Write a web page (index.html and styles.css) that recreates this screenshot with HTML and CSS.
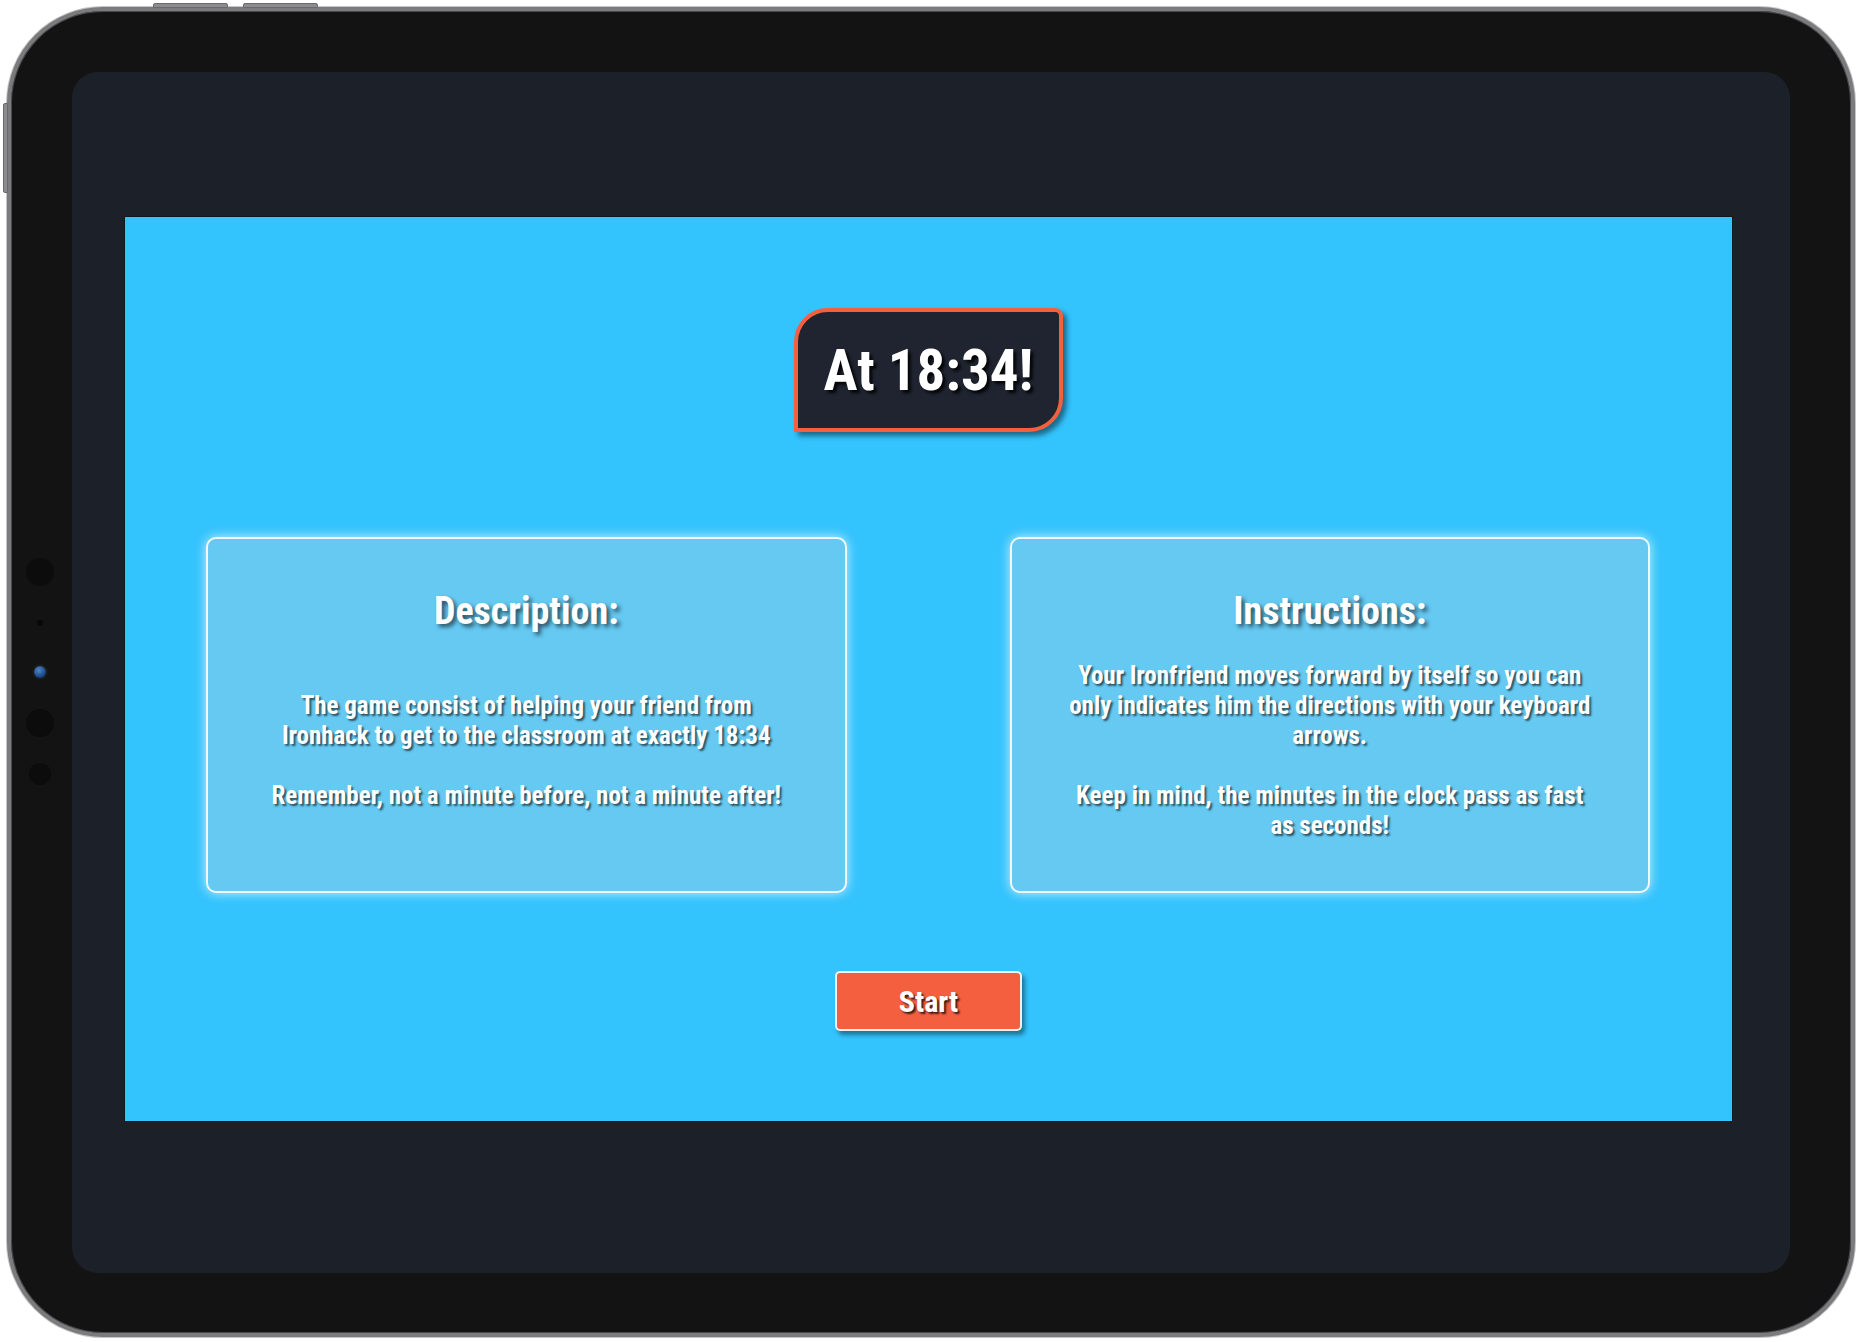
FILE: index.html
```html
<!DOCTYPE html>
<html lang="en">
<head>
<meta charset="utf-8">
<title>At 18:34!</title>
<link rel="stylesheet" href="styles.css">
</head>
<body>
<div class="page">
  <div class="device">
    <span class="hw-btn hw-top hw-top-1"></span>
    <span class="hw-btn hw-top hw-top-2"></span>
    <span class="hw-btn hw-side"></span>
    <span class="sensor s1"></span>
    <span class="sensor s2"></span>
    <span class="sensor s3"></span>
    <span class="sensor s4"></span>
    <span class="sensor s5"></span>
    <div class="screen">
      <main class="game">
        <h1 class="title">At 18:34!</h1>
        <section class="cards">
          <article class="card">
            <h2 class="card-title">Description:</h2>
            <div class="card-body">
              <p>The game consist of helping your friend from Ironhack to get to the classroom at exactly 18:34<br><br>Remember, not a minute before, not a minute after!</p>
            </div>
          </article>
          <article class="card">
            <h2 class="card-title">Instructions:</h2>
            <div class="card-body">
              <p>Your Ironfriend moves forward by itself so you can only indicates him the directions with your keyboard arrows.<br><br>Keep in mind, the minutes in the clock pass as fast as seconds!</p>
            </div>
          </article>
        </section>
        <button class="start">Start</button>
      </main>
    </div>
  </div>
</div>
</body>
</html>
```
FILE: styles.css
```css
* { box-sizing: border-box; }
html, body { margin: 0; padding: 0; background: #ffffff; }
body { font-family: Roboto, "Liberation Sans", sans-serif; }

.page { padding: 7px 3px 5px 7px; }

.device {
  position: relative;
  width: 1848px;
  height: 1330px;
  background: #131313;
  border: 4px solid #7b7b7d;
  border-radius: 96px;
  box-shadow: inset 0 0 0 1px #4a4a4c, 0 0 0 1px #c4c4c6;
  padding: 61px 61px 60px 61px;
  display: flex;
}

.hw-btn { position: absolute; background: #8c8c8e; border: 1px solid #6a6a6c; }
.hw-top { top: -8px; height: 5px; width: 75px; border-radius: 2px 2px 0 0; }
.hw-top-1 { left: 142px; }
.hw-top-2 { left: 232px; }
.hw-side { left: -8px; top: 92px; width: 5px; height: 90px; border-radius: 2px 0 0 2px; }

.sensor { position: absolute; border-radius: 50%; background: #0c0c0c; }
.s1 { left: 15px; top: 547px; width: 28px; height: 28px; }
.s2 { left: 26px; top: 609px; width: 6px; height: 6px; background: #080808; }
.s3 { left: 23px; top: 655px; width: 12px; height: 12px; background: radial-gradient(circle at 40% 35%, #4f86c9, #1d4a8a 60%, #0d2548); box-shadow: 0 0 0 2px #1a1a1a; }
.s4 { left: 15px; top: 698px; width: 28px; height: 28px; }
.s5 { left: 18px; top: 752px; width: 22px; height: 22px; }

.screen {
  flex: 1;
  background: #1c2129;
  border-radius: 26px;
  padding: 144px 57px 151px 52px;
  display: flex;
}

.game {
  flex: 1;
  background: #33c3fd;
  border: 1px solid #0b1a22;
  display: flex;
  flex-direction: column;
  align-items: center;
  padding-top: 91px;
}

.title {
  margin: 0;
  width: 269px;
  height: 124px;
  background: #1f2430;
  border: 4px solid #f4603f;
  border-radius: 34px 8px 34px 0;
  box-shadow: 4px 4px 5px rgba(0, 0, 0, 0.45);
  color: #ffffff;
  font-size: 57px;
  font-weight: 700;
  font-stretch: 75%;
  display: flex;
  align-items: center;
  justify-content: center;
  text-shadow: 3px 3px 3px rgba(0, 0, 0, 0.85);
  letter-spacing: 0;
}

.cards {
  align-self: stretch;
  display: flex;
  gap: 163px;
  padding: 0 82px 0 81px;
  margin-top: 105px;
}

.card {
  flex: 1;
  height: 356px;
  background: #65c9f2;
  border: 2px solid #eef8ff;
  border-radius: 10px;
  box-shadow: 0 0 12px rgba(255, 255, 255, 0.75);
  display: flex;
  flex-direction: column;
  align-items: center;
  padding: 50px 55px 24px;
  color: #ffffff;
  text-align: center;
}

.card-title {
  margin: 0;
  font-size: 38px;
  line-height: 45px;
  font-weight: 700;
  font-stretch: 75%;
  text-shadow: 3px 3px 4px rgba(0, 0, 0, 0.6);
}

.card-body {
  flex: 1;
  display: flex;
  align-items: center;
  justify-content: center;
}

.card-body p {
  margin: 0;
  font-size: 25px;
  line-height: 30px;
  font-weight: 700;
  font-stretch: 75%;
  text-shadow: 2px 2px 2px rgba(0, 0, 0, 0.6);
}

.start {
  margin-top: 78px;
  width: 187px;
  height: 60px;
  background: #f4603f;
  border: 2px solid #f2f2f2;
  border-radius: 5px;
  box-shadow: 3px 4px 4px rgba(0, 0, 0, 0.4);
  color: #ffffff;
  font-family: Roboto, "Liberation Sans", sans-serif;
  font-size: 30px;
  font-weight: 700;
  font-stretch: 75%;
  text-shadow: 2px 2px 2px rgba(0, 0, 0, 0.75);
  cursor: pointer;
  padding: 0;
}
```
